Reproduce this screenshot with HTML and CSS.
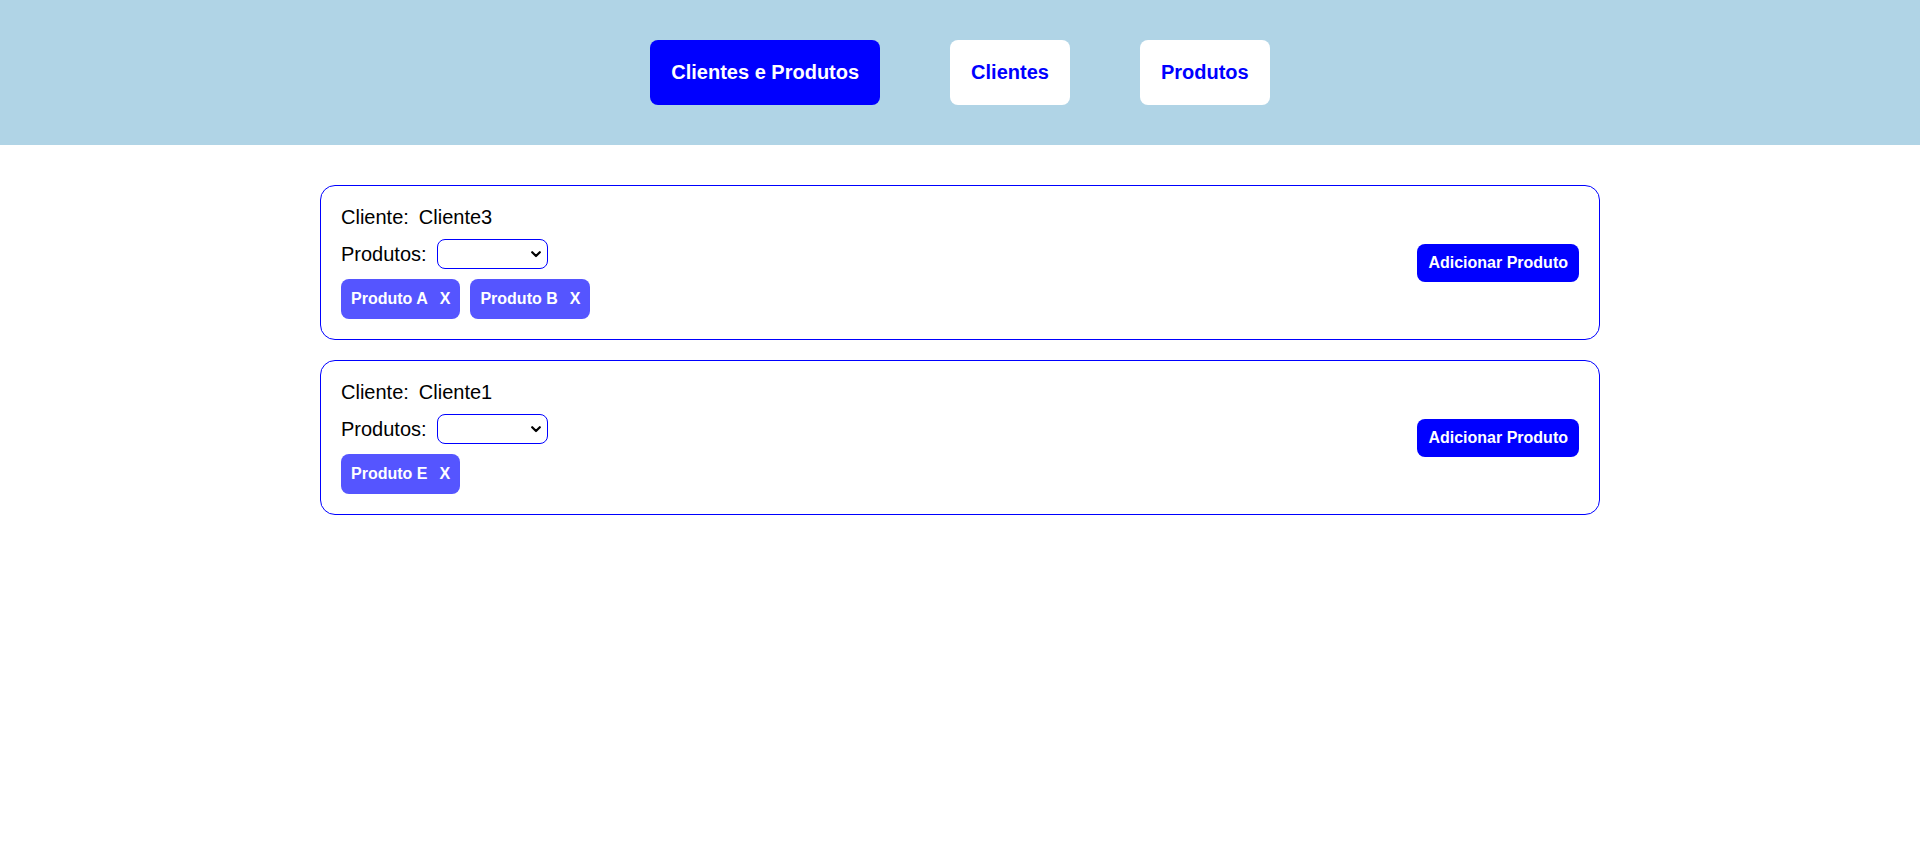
FILE: index.html
```html
<!DOCTYPE html>
<html lang="pt">
<head>
<meta charset="utf-8">
<title>Clientes e Produtos</title>
<link rel="stylesheet" href="styles.css">
</head>
<body>
<header class="topbar">
  <button class="nav-btn active">Clientes e Produtos</button>
  <button class="nav-btn">Clientes</button>
  <button class="nav-btn">Produtos</button>
</header>
<main class="list">
  <section class="card">
    <div class="card-info">
      <div class="row"><span class="label">Cliente:</span><span>Cliente3</span></div>
      <div class="row"><span class="label">Produtos:</span>
        <select class="product-select">
          <option value=""></option>
          <option>Produto A</option>
          <option>Produto B</option>
          <option>Produto C</option>
        </select>
      </div>
      <div class="chips">
        <span class="chip"><span>Produto A</span><span class="chip-x">X</span></span>
        <span class="chip"><span>Produto B</span><span class="chip-x">X</span></span>
      </div>
    </div>
    <button class="add-btn">Adicionar Produto</button>
  </section>
  <section class="card">
    <div class="card-info">
      <div class="row"><span class="label">Cliente:</span><span>Cliente1</span></div>
      <div class="row"><span class="label">Produtos:</span>
        <select class="product-select">
          <option value=""></option>
          <option>Produto A</option>
          <option>Produto B</option>
          <option>Produto C</option>
        </select>
      </div>
      <div class="chips">
        <span class="chip"><span>Produto E</span><span class="chip-x">X</span></span>
      </div>
    </div>
    <button class="add-btn">Adicionar Produto</button>
  </section>
</main>
</body>
</html>
```
FILE: styles.css
```css
* { box-sizing: border-box; }

body {
  margin: 0;
  font-family: "Liberation Sans", Arial, sans-serif;
  color: #000;
  background: #fff;
}

.topbar {
  height: 145px;
  background: #b0d4e6;
  display: flex;
  align-items: center;
  justify-content: center;
  gap: 70px;
}

.nav-btn {
  font-family: "Liberation Sans", Arial, sans-serif;
  font-size: 20px;
  font-weight: bold;
  line-height: 25px;
  padding: 20px 21px;
  border: none;
  border-radius: 8px;
  background: #fff;
  color: #0000ff;
}

.nav-btn.active {
  background: #0000ff;
  color: #fff;
}

.list {
  padding-top: 40px;
}

.card {
  width: 1280px;
  margin: 0 auto 20px;
  border: 1px solid #0000ff;
  border-radius: 15px;
  padding: 20px;
  display: flex;
  justify-content: space-between;
  align-items: center;
}

.card-info {
  display: flex;
  flex-direction: column;
  gap: 10px;
  font-size: 20px;
}

.row {
  display: flex;
  align-items: center;
  line-height: 23px;
}

.label {
  margin-right: 10px;
}

.product-select {
  -webkit-appearance: none;
  appearance: none;
  width: 111px;
  height: 30px;
  border: 1px solid #0000ff;
  border-radius: 8px;
  background-color: #fff;
  background-image: url("data:image/svg+xml;utf8,<svg xmlns='http://www.w3.org/2000/svg' width='10' height='7' viewBox='0 0 10 7'><path d='M1.2 1.2 L5 5 L8.8 1.2' fill='none' stroke='%23000' stroke-width='2.2' stroke-linecap='round' stroke-linejoin='round'/></svg>");
  background-repeat: no-repeat;
  background-position: right 6px center;
  background-size: 10px 7px;
}

.chips {
  display: flex;
  gap: 10px;
}

.chip {
  height: 40px;
  padding: 0 10px;
  display: flex;
  align-items: center;
  gap: 12px;
  background: #5555ff;
  color: #fff;
  font-size: 16px;
  font-weight: bold;
  border-radius: 8px;
}

.add-btn {
  font-family: "Liberation Sans", Arial, sans-serif;
  font-size: 16px;
  font-weight: bold;
  line-height: 18px;
  padding: 10px 11px;
  border: none;
  border-radius: 8px;
  background: #0000ff;
  color: #fff;
}
```
